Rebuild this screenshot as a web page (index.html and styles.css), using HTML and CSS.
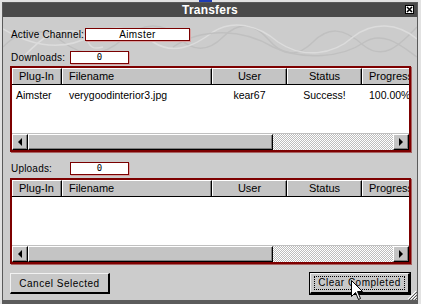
FILE: index.html
```html
<!DOCTYPE html>
<html>
<head>
    <title>Transfers</title>
    <link rel="stylesheet" href="styles.css">
</head>
<body>
    <div class="topbit"></div>
    <div class="window">
        <svg class="swirl" width="414" height="44" viewBox="0 0 414 44">
            <path d="M0 30 C20 10 40 10 60 25 C80 40 100 40 120 22 C140 5 160 5 175 20 C190 35 205 35 220 20 C235 5 250 5 265 22 C280 40 295 40 310 25 C325 10 340 10 360 28 C380 44 395 30 414 10" class="line-a"/>
            <path d="M0 12 C30 30 60 35 90 18 C110 6 130 10 150 25 C170 38 190 30 210 15 C230 2 255 8 275 25 C300 42 330 38 350 20 C370 4 395 6 414 22" class="line-b"/>
            <path d="M170 30 C200 10 240 12 270 30 C300 44 340 40 360 26 C380 12 400 30 414 40" class="line-a"/>
            <path d="M20 40 C40 20 50 12 70 14 C90 16 80 36 100 30" class="line-b"/>
        </svg>
        <div class="titlebar">
            <span class="title">Transfers</span>
            <span class="close">
                <svg width="9" height="9" viewBox="0 0 9 9"><rect x="0.5" y="0.5" width="8" height="8" fill="#fff" stroke="#000"/><path d="M2 2 L7 7 M7 2 L2 7" stroke="#000" stroke-width="1.6"/></svg>
            </span>
        </div>
        <div class="content">
            <div class="field-row">
                <label class="wide-label">Active Channel:</label>
                <div class="box channel">Aimster</div>
            </div>
            <div class="field-row gap">
                <label>Downloads:</label>
                <div class="box num">0</div>
            </div>
            <div class="list">
                <div class="list-head">
                    <div class="hcell c1 left">Plug-In</div>
                    <div class="hcell c2 left">Filename</div>
                    <div class="hcell c3">User</div>
                    <div class="hcell c4">Status</div>
                    <div class="hcell c5 left">Progress</div>
                </div>
                <div class="list-body">
                    <div class="row">
                        <div class="cell c1 first">Aimster</div>
                        <div class="cell c2 left">verygoodinterior3.jpg</div>
                        <div class="cell c3">kear67</div>
                        <div class="cell c4">Success!</div>
                        <div class="cell c5 left">100.00%</div>
                    </div>
                </div>
                <div class="scrollbar">
                    <div class="sbtn"><svg width="5" height="8" viewBox="0 0 5 8"><path d="M4 0 L0 4 L4 8 Z" fill="#000"/></svg></div>
                    <div class="thumb"></div>
                    <div class="track"></div>
                    <div class="sbtn"><svg width="5" height="8" viewBox="0 0 5 8"><path d="M0 0 L4 4 L0 8 Z" fill="#000"/></svg></div>
                </div>
            </div>
            <div class="field-row gap">
                <label>Uploads:</label>
                <div class="box num">0</div>
            </div>
            <div class="list second">
                <div class="list-head">
                    <div class="hcell c1 left">Plug-In</div>
                    <div class="hcell c2 left">Filename</div>
                    <div class="hcell c3">User</div>
                    <div class="hcell c4">Status</div>
                    <div class="hcell c5 left">Progress</div>
                </div>
                <div class="list-body"></div>
                <div class="scrollbar">
                    <div class="sbtn"><svg width="5" height="8" viewBox="0 0 5 8"><path d="M4 0 L0 4 L4 8 Z" fill="#000"/></svg></div>
                    <div class="thumb"></div>
                    <div class="track"></div>
                    <div class="sbtn"><svg width="5" height="8" viewBox="0 0 5 8"><path d="M0 0 L4 4 L0 8 Z" fill="#000"/></svg></div>
                </div>
            </div>
            <div class="buttons">
                <button class="btn">Cancel Selected</button>
                <button class="btn focused"><span>Clear Completed</span></button>
            </div>
        </div>
        <svg class="grip" width="10" height="10" viewBox="0 0 10 10">
            <path d="M9 1 L1 9 M9 4 L4 9 M9 7 L7 9" stroke="#fff" stroke-width="1"/>
            <path d="M10 2 L2 10 M10 5 L5 10 M10 8 L8 10" stroke="#555" stroke-width="1"/>
        </svg>
        <svg class="cursor" width="13" height="21" viewBox="0 0 13 21">
            <path d="M0.5 0.5 L0.5 16.5 L4.5 12.5 L7.5 19.5 L9.5 18.5 L6.5 11.5 L11.5 11.5 Z" fill="#fff" stroke="#000" stroke-width="1"/>
        </svg>
    </div>
</body>
</html>
```

FILE: styles.css
```css
body { margin: 0; width: 421px; height: 304px; overflow: hidden; background-color: #e2e2e2; font-family: "Liberation Sans", Arial, sans-serif; }
.topbit { position: absolute; left: 199px; top: 0; width: 13px; height: 2px; background-color: #1e3cb4; }
.window { position: relative; box-sizing: border-box; margin: 2px 3px 0 2px; height: 302px; background-color: #cccccc; border: 1px solid #5a5a5a; border-bottom: 4px solid #5c5c5c; }
.swirl { position: absolute; left: 0; top: 14px; }
.swirl path { fill: none; stroke-width: 1.5; }
.swirl .line-a { stroke: #c0c0c0; }
.swirl .line-b { stroke: #dcdcdc; }
.titlebar { position: relative; height: 14px; background-color: #4a4a4a; display: flex; justify-content: center; align-items: center; }
.title { color: #fff; font-weight: bold; font-size: 12px; letter-spacing: 0.2px; }
.close { position: absolute; right: 3px; top: 2px; height: 9px; display: flex; }
.content { position: relative; padding: 11px 0 0 7px; }
.field-row { display: flex; align-items: center; height: 13px; }
.field-row.gap { margin-top: 10px; }
.field-row label { flex: none; width: 59px; margin-left: 1px; font-size: 10px; letter-spacing: 0.2px; white-space: nowrap; color: #000; }
.field-row label.wide-label { width: 74px; }
.box { box-sizing: border-box; height: 13px; background-color: #fff; border: 1px solid #7a0000; box-shadow: 1px 1px 0 #d9a0a0; font-size: 10px; line-height: 11px; text-align: center; }
.box.channel { width: 105px; letter-spacing: 0.4px; }
.box.num { width: 59px; font-family: "DejaVu Sans Mono", monospace; font-size: 9px; }
.list { box-sizing: border-box; width: 401px; height: 86px; margin-top: 2px; border: 2px solid #7d0000; box-shadow: 1px 1px 0 #a86060; display: flex; flex-direction: column; background-color: #fff; }
.list.second { margin-top: 3px; }
.list-head { display: flex; height: 17px; flex: none; overflow: hidden; border-bottom: 1px solid #000; box-sizing: border-box; }
.hcell { box-sizing: border-box; height: 16px; flex: none; background-color: #c4c4c4; border-top: 1px solid #fff; border-left: 1px solid #fff; border-right: 1px solid #000; box-shadow: inset -1px 0 0 #808080; font-size: 11px; line-height: 15px; text-align: center; white-space: nowrap; overflow: hidden; }
.hcell.left { text-align: left; padding-left: 6px; }
.c1 { width: 50px; }
.c2 { width: 150px; }
.c3 { width: 75px; }
.c4 { width: 75px; }
.c5 { width: 47px; border-right: none; box-shadow: none; }
.list-body { flex: 1; background-color: #fff; }
.row { display: flex; height: 14px; margin-top: 3px; }
.cell { flex: none; font-size: 10.5px; line-height: 14px; text-align: center; white-space: nowrap; overflow: hidden; }
.cell.first { padding-left: 4px; box-sizing: border-box; text-align: left; }
.cell.left { padding-left: 7px; box-sizing: border-box; text-align: left; }
.scrollbar { display: flex; height: 17px; flex: none; border-top: 1px solid #c0c0c0; box-sizing: border-box; }
.sbtn { box-sizing: border-box; width: 16px; height: 16px; background-color: #c4c4c4; border-top: 1px solid #fff; border-left: 1px solid #fff; border-right: 1px solid #000; border-bottom: 1px solid #000; box-shadow: inset -1px -1px 0 #808080; display: flex; align-items: center; justify-content: center; }
.thumb { box-sizing: border-box; width: 245px; height: 16px; background-color: #c4c4c4; border-top: 1px solid #fff; border-left: 1px solid #fff; border-right: 1px solid #000; border-bottom: 1px solid #000; box-shadow: inset -1px -1px 0 #808080; }
.track { flex: 1; height: 16px; background-image: conic-gradient(#ffffff 25%, #bdbdbd 0 50%, #ffffff 0 75%, #bdbdbd 0); background-size: 2px 2px; }
.buttons { display: flex; justify-content: space-between; width: 400px; margin-top: 9px; }
.btn { box-sizing: border-box; width: 100px; height: 21px; padding: 0; background-color: #c8c8c8; border-top: 1px solid #f2f2f2; border-left: 1px solid #f2f2f2; border-right: 2px solid #000; border-bottom: 2px solid #000; font-family: "Liberation Sans", Arial, sans-serif; font-size: 10px; letter-spacing: 0.5px; color: #000; }
.btn.focused { outline: 1px solid #000; outline-offset: 0; }
.btn.focused span { display: block; margin: 2px 3px; border: 1px dotted #000; line-height: 12px; }
.grip { position: absolute; right: 0; bottom: 0; }
.cursor { position: absolute; left: 348px; top: 277px; }
```
